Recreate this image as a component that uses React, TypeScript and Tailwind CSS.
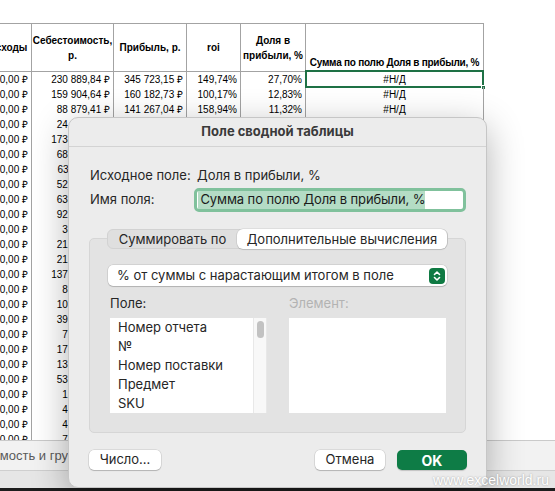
import React from "react";

const topRows = [
  ["500,00 ₽", "230 889,84 ₽", "345 723,15 ₽", "149,74%", "27,70%", "#Н/Д"],
  ["500,00 ₽", "159 904,64 ₽", "160 182,73 ₽", "100,17%", "12,83%", "#Н/Д"],
  ["500,00 ₽", "88 879,41 ₽", "141 267,04 ₽", "158,94%", "11,32%", "#Н/Д"],
];

const prefixes = ["24", "173", "68", "63", "52", "63", "92", "3", "21", "21", "137", "8", "10", "39", "7", "17", "13", "53", "1", "4", "4", "7"];

const rows = [
  ...topRows,
  ...prefixes.map((p, i) => [
    "500,00 ₽",
    `${p} ${(100 + ((i * 137) % 899)).toString()},${((i * 37) % 90 + 10).toString()} ₽`,
    "",
    "",
    "",
    "",
  ]),
];

const cell = "border-r border-[#a3a3a3]";

function Stepper() {
  return (
    <div className="flex h-[16px] w-[16px] items-center justify-center rounded-[4px] bg-[#0f7a43]">
      <svg width="8" height="12" viewBox="0 0 8 12" fill="none" stroke="white" strokeWidth="1.6" strokeLinecap="round" strokeLinejoin="round">
        <path d="M1.5 4.5 L4 2 L6.5 4.5" />
        <path d="M1.5 7.5 L4 10 L6.5 7.5" />
      </svg>
    </div>
  );
}

export default function App() {
  return (
    <div className="relative h-[491px] w-[555px] overflow-hidden bg-white font-['Liberation_Sans',sans-serif]">
      <div className="flex h-full flex-col">
        <div className="h-[23px] shrink-0" />
        <div className="flex-1 overflow-hidden">
          <div className="ml-[-20px] grid w-max grid-cols-[52px_82px_73px_54px_65px_178px] text-[10px] text-black">
            <div className={`${cell} flex h-[49px] items-center justify-center border-y font-bold`}>Расходы</div>
            <div className={`${cell} flex h-[49px] flex-col items-center justify-center border-y text-center font-bold leading-[15px]`}>
              <span>Себестоимость,</span>
              <span>р.</span>
            </div>
            <div className={`${cell} flex h-[49px] items-center justify-center border-y font-bold`}>Прибыль, р.</div>
            <div className={`${cell} flex h-[49px] items-center justify-center border-y font-bold`}>roi</div>
            <div className={`${cell} flex h-[49px] flex-col items-center justify-center border-y text-center font-bold leading-[15px]`}>
              <span>Доля в</span>
              <span>прибыли, %</span>
            </div>
            <div className={`${cell} flex h-[49px] items-end justify-center whitespace-nowrap border-y pb-[1px] font-bold tracking-[-0.25px]`}>
              Сумма по полю Доля в прибыли, %
            </div>
            {rows.map((r, i) => (
              <React.Fragment key={i}>
                <div className={`${cell} flex h-[15px] justify-end whitespace-nowrap pr-[3px] leading-[15px]`}>{r[0]}</div>
                <div className={`${cell} flex h-[15px] justify-end whitespace-nowrap pr-[3px] leading-[15px]`}>{r[1]}</div>
                <div className={`${cell} flex h-[15px] justify-end whitespace-nowrap pr-[3px] leading-[15px]`}>{r[2]}</div>
                <div className={`${cell} flex h-[15px] justify-end whitespace-nowrap pr-[3px] leading-[15px]`}>{r[3]}</div>
                <div className={`${cell} flex h-[15px] justify-end whitespace-nowrap pr-[3px] leading-[15px]`}>{r[4]}</div>
                <div className={`${cell} relative flex h-[15px] justify-center whitespace-nowrap leading-[15px]`}>
                  {r[5]}
                  {i === 0 && (
                    <>
                      <div className="absolute -left-[1px] -right-[1px] -top-[2px] -bottom-[1px] border-2 border-[#1e7145]" />
                      <div className="absolute -bottom-[3px] -right-[3px] h-[5px] w-[5px] border border-white bg-[#1e7145]" />
                    </>
                  )}
                </div>
              </React.Fragment>
            ))}
          </div>
        </div>
        <div className="flex h-[30px] shrink-0 items-center overflow-hidden whitespace-nowrap border-t border-[#cacaca] bg-[#f2f2f2] text-[13px] text-[#5a5a5a]">
          <span className="ml-[-58px]">Себестоимость и группировка</span>
        </div>
        <div className="h-[18px] shrink-0 border-t border-[#cfcfcf] bg-[#e6e6e6]" />
        <div className="h-[3px] shrink-0 bg-[#1d1d1d]" />
      </div>

      <div className="absolute left-[68px] top-[117px] flex h-[371px] w-[419px] flex-col rounded-[10px] border border-[#c6c6c6] bg-[#ececec] font-['Inter',sans-serif] text-[13px] text-[#262626] shadow-[0_10px_36px_rgba(0,0,0,0.3)]">
        <div className="flex h-[29px] shrink-0 items-center justify-center border-b border-[#d3d3d3] font-bold text-[#3a3a3a]">
          Поле сводной таблицы
        </div>
        <div className="flex flex-col px-[20px]">
          <div className="mt-[20px] flex leading-[16px]">
            <span className="w-[108px] pl-[1px]">Исходное поле:</span>
            <span>Доля в прибыли, %</span>
          </div>
          <div className="mt-[5px] flex h-[24px] items-center">
            <span className="w-[106px] pl-[1px]">Имя поля:</span>
            <div className="flex h-[24px] w-[273px] items-stretch rounded-[5px] border-[3px] border-[#80c19c] bg-white pl-[1px]">
              <span className="flex items-center bg-[#b4dcc5] pl-[2px] tracking-[-0.1px] text-[#1a1a1a]">Сумма по полю Доля в прибыли, %</span>
            </div>
          </div>

          <div className="relative z-10 mt-[17px] flex justify-center">
            <div className="flex h-[20px] w-[341px] items-center rounded-[6px] border border-[#d2d2d2] bg-[#dfdfdf] leading-[16px]">
              <div className="flex w-[129px] justify-center">Суммировать по</div>
              <div className="flex h-[20px] flex-1 items-center justify-center rounded-[6px] bg-white shadow-[0_0_0_0.5px_rgba(0,0,0,0.12),0_1px_1px_rgba(0,0,0,0.12)]">
                Дополнительные вычисления
              </div>
            </div>
          </div>

          <div className="-mt-[11px] rounded-[5px] border border-[#d6d6d6] bg-[#e3e3e3] px-[18px] pb-[19px] pt-[26px]">
            <div className="flex h-[21px] items-center justify-between rounded-[5px] bg-white pl-[9px] pr-[2px] shadow-[0_0_0_0.5px_rgba(0,0,0,0.15),0_1px_1px_rgba(0,0,0,0.15)]">
              <span>% от суммы с нарастающим итогом в поле</span>
              <Stepper />
            </div>
            <div className="ml-[2px] mt-[9px] flex gap-[22px] leading-[16px]">
              <span className="w-[157px]">Поле:</span>
              <span className="w-[157px] text-[#b3b3b3]">Элемент:</span>
            </div>
            <div className="ml-[2px] mt-[7px] flex h-[95px] gap-[22px]">
              <div className="flex w-[157px] overflow-hidden bg-white">
                <div className="flex flex-1 flex-col pl-[8px] leading-[19px]">
                  <span>Номер отчета</span>
                  <span>№</span>
                  <span>Номер поставки</span>
                  <span>Предмет</span>
                  <span>SKU</span>
                </div>
                <div className="flex w-[14px] justify-center border-x border-[#e8e8e8] bg-[#f8f8f8]">
                  <div className="mt-[3px] h-[17px] w-[7px] rounded-full bg-[#c2c2c2]" />
                </div>
              </div>
              <div className="w-[157px] bg-white" />
            </div>
          </div>

          <div className="mt-[17px] flex h-[20px] items-center">
            <button className="flex h-[20px] w-[72px] items-center justify-center rounded-[5px] bg-white shadow-[0_0_0_0.5px_rgba(0,0,0,0.15),0_1px_1px_rgba(0,0,0,0.18)]">
              Число...
            </button>
            <button className="ml-auto flex h-[20px] w-[70px] items-center justify-center rounded-[5px] bg-white shadow-[0_0_0_0.5px_rgba(0,0,0,0.15),0_1px_1px_rgba(0,0,0,0.18)]">
              Отмена
            </button>
            <button className="ml-[12px] mr-[-1px] flex h-[20px] w-[70px] items-center justify-center rounded-[5px] bg-[#0e7c46] text-[14px] font-bold text-white shadow-[0_1px_1px_rgba(0,0,0,0.18)]">
              OK
            </button>
          </div>
        </div>
      </div>

      <div className="absolute left-[433px] top-[472px] font-['Liberation_Sans',sans-serif] text-[14px] leading-[16px] text-white [text-shadow:0_0_2px_rgba(0,0,0,0.35)]">
        www.excelworld.ru
      </div>
    </div>
  );
}
